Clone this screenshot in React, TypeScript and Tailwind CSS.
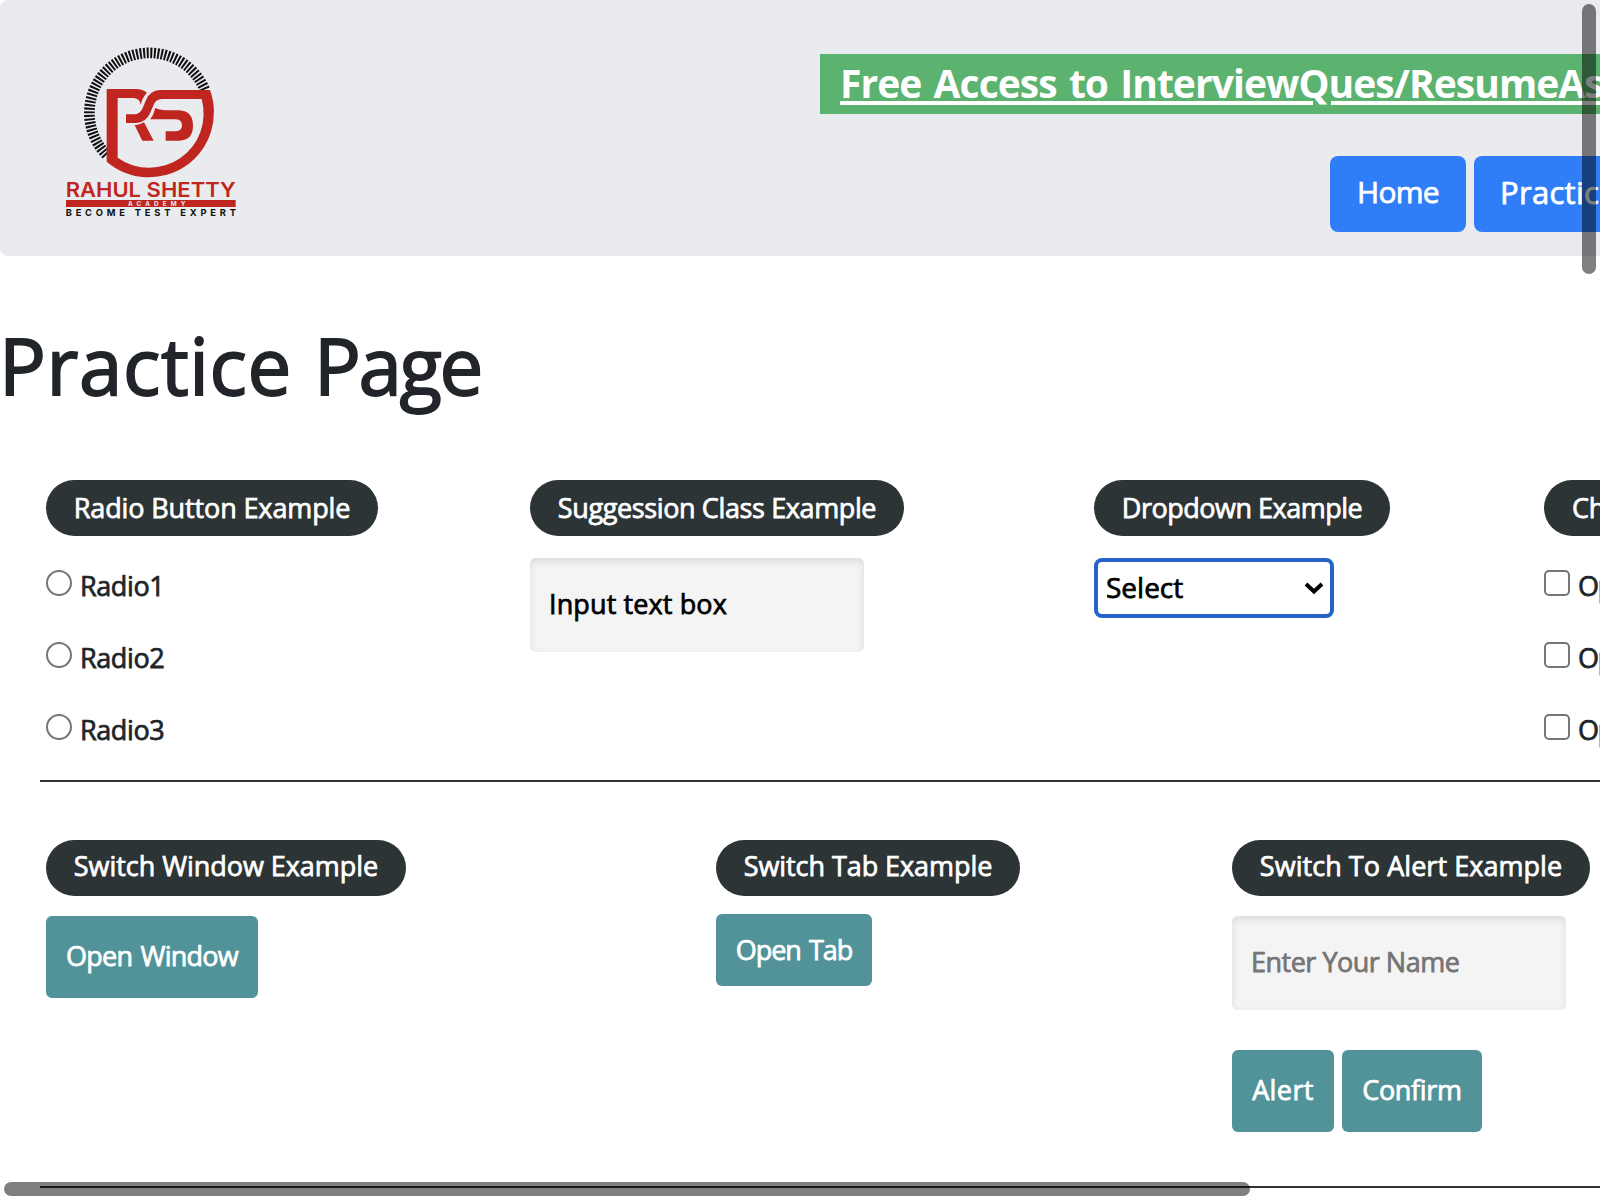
import type { ReactNode } from "react";

function Logo() {
  return (
    <svg viewBox="0 0 600 600" className="h-[200px] w-[200px]" aria-label="Rahul Shetty Academy">
      <path
        d="M169.5 374.5 A180 180 0 1 1 465 181"
        fill="none"
        stroke="#101010"
        strokeWidth="32"
        strokeDasharray="6 4.6"
      />
      <g fill="#bf2620">
        <path d="M170 177H256Q280 178 291 188Q277 202 272 224Q270 206 252 204H203V383A163 163 0 0 0 455 207H335Q318 208 312 222L300 250Q288 278 258 279H228V253H252Q270 252 277 236L288 210Q300 181 330 180H480A195 195 0 0 1 170 395Z" />
        <path d="M315 234Q328 240 345 241H388Q429 244 429 287Q429 330 388 332H347V304H378Q396 303 396 286Q396 269 378 268H300Q312 255 315 234Z" />
        <path d="M254 286Q270 284 282 277L311 332H277Z" />
        <rect x="48" y="510" width="509" height="21" />
        <text x="47" y="502" fontFamily="Inter" fontSize="62" fontWeight="600" textLength="510" lengthAdjust="spacingAndGlyphs">
          RAHUL SHETTY
        </text>
      </g>
      <text x="234" y="527.5" fill="#e9ebef" fontFamily="Inter" fontSize="19" fontWeight="700" textLength="172">
        ACADEMY
      </text>
      <text x="47" y="557.5" fill="#101010" fontFamily="Inter" fontSize="28" fontWeight="700" textLength="511">
        BECOME TEST EXPERT
      </text>
    </svg>
  );
}

function Pill({ className, children }: { className: string; children: ReactNode }) {
  return (
    <div className={`h-14 shrink-0 rounded-full bg-[#2d3436] text-center whitespace-nowrap text-white ${className}`}>
      {children}
    </div>
  );
}

function Button({ className, children }: { className: string; children: ReactNode }) {
  return (
    <button className={`block shrink-0 rounded-md bg-[#529299] text-center whitespace-nowrap text-white ${className}`}>
      {children}
    </button>
  );
}

function Field({ className, children }: { className: string; children: ReactNode }) {
  return (
    <div
      className={`h-[94px] w-[334px] rounded-md bg-[#f4f4f4] pl-[19px] leading-[91px] whitespace-nowrap shadow-[inset_0_3px_7px_#dadada] ${className}`}
    >
      {children}
    </div>
  );
}

function Choice({ round, children }: { round?: boolean; children: ReactNode }) {
  return (
    <label className="flex h-[72px] gap-2">
      <span
        className={`mt-1 h-[26px] w-[26px] shrink-0 border-2 border-[#767676] bg-white ${round ? "rounded-full" : "rounded-[5px]"}`}
      />
      <span className={`leading-[39px] whitespace-nowrap ${round ? "tracking-[-0.4px]" : "tracking-[-1.2px]"}`}>
        {children}
      </span>
    </label>
  );
}

export default function App() {
  return (
    <div className="relative flex h-[1200px] w-[1600px] flex-col overflow-hidden bg-white font-['Open_Sans',sans-serif] text-[27px] text-[#212529] [-webkit-text-stroke:0.75px_currentColor]">
      <header className="flex h-64 shrink-0 justify-between rounded-l-lg bg-[#e9ebef]">
        <div className="pt-[30px] pl-[50px] [-webkit-text-stroke:0px]">
          <Logo />
        </div>
        <div className="w-[780px] shrink-0 overflow-hidden pt-[54px]">
          <a
            href="#"
            className="block h-[60px] bg-[#5cb26f] pl-5 text-[39px] leading-[58px] font-bold tracking-[-0.95px] whitespace-nowrap text-white underline decoration-4 underline-offset-[3px] [-webkit-text-stroke:0px] [word-spacing:3px]"
          >
            Free Access to InterviewQues/ResumeAssistance/Material
          </a>
          <nav className="mt-[42px] flex gap-2 pl-[510px] text-[31px] leading-[72px] text-white">
            <a href="#" className="h-[76px] w-[136px] shrink-0 rounded-lg bg-[#2f7ef8] text-center text-[30px] tracking-[-0.7px]">
              Home
            </a>
            <a href="#" className="h-[76px] w-[160px] shrink-0 rounded-lg bg-[#2f7ef8] pl-[26px] tracking-[0.3px]">
              Practice
            </a>
          </nav>
        </div>
      </header>

      <h1 className="mt-[58px] flex h-[166px] shrink-0 text-[78px] leading-[103px] [-webkit-text-stroke:1.8px_currentColor]">
        <span className="-ml-px w-[315px] tracking-[0.6px]">Practice </span>
        <span className="tracking-[-2.4px]">Page</span>
      </h1>

      <section className="ml-10 flex h-[302px] shrink-0 border-b-2 border-[#2d3436] pl-1.5 leading-[55px]">
        <div className="w-[484px] shrink-0">
          <Pill className="w-[332px] tracking-[-0.12px]">Radio Button Example</Pill>
          <div className="mt-[30px]">
            <Choice round>Radio1</Choice>
            <Choice round>Radio2</Choice>
            <Choice round>Radio3</Choice>
          </div>
        </div>
        <div className="w-[564px] shrink-0">
          <Pill className="w-[374px] tracking-[-0.38px]">Suggession Class Example</Pill>
          <Field className="mt-[22px] tracking-[0.12px] text-black">Input text box</Field>
        </div>
        <div className="w-[450px] shrink-0">
          <Pill className="w-[296px] tracking-[-0.5px]">Dropdown Example</Pill>
          <div className="mt-[22px] flex h-[60px] w-[240px] justify-between rounded-lg border-4 border-[#2464c9] pr-1.5 pl-2 text-[28px] leading-[50px] text-black">
            <span>Select</span>
            <svg viewBox="0 0 20 14" className="mt-[19px] h-[14px] w-5" aria-hidden="true">
              <path d="M2 3l8 7.5L18 3" fill="none" stroke="currentColor" strokeWidth="4" />
            </svg>
          </div>
        </div>
        <div className="w-[320px] shrink-0">
          <Pill className="w-[320px] tracking-[-0.3px]">
            <span className="block pl-7 text-left">Checkbox Example</span>
          </Pill>
          <div className="mt-[30px]">
            <Choice>Option1</Choice>
            <Choice>Option2</Choice>
            <Choice>Option3</Choice>
          </div>
        </div>
      </section>

      <section className="ml-10 flex h-[406px] shrink-0 border-b-2 border-[#2d3436] pt-[58px] pl-1.5 leading-[51px]">
        <div className="w-[670px] shrink-0">
          <Pill className="w-[360px] tracking-[-0.05px]">Switch Window Example</Pill>
          <Button className="mt-5 h-[82px] w-[212px] pb-1 leading-[79px] tracking-[-0.75px] [word-spacing:2px]">Open Window</Button>
        </div>
        <div className="w-[516px] shrink-0">
          <Pill className="w-[304px] tracking-[-0.06px]">Switch Tab Example</Pill>
          <Button className="mt-[18px] h-[72px] w-[156px] pb-0.5 leading-[71px] tracking-[-1px] [word-spacing:2px]">Open Tab</Button>
        </div>
        <div className="w-[358px] shrink-0">
          <Pill className="w-[358px] tracking-[0.05px]">Switch To Alert Example</Pill>
          <Field className="mt-5 tracking-[-0.5px] text-[#757575]">Enter Your Name</Field>
          <div className="mt-10 flex gap-2">
            <Button className="h-[82px] w-[102px] pb-1 leading-[79px] tracking-[0.4px]">Alert</Button>
            <Button className="h-[82px] w-[140px] pb-1 leading-[79px] tracking-[-0.33px]">Confirm</Button>
          </div>
        </div>
      </section>

      <div className="absolute top-1 right-1 h-[270px] w-3.5 rounded-full bg-black/50" />
      <div className="absolute bottom-1 left-1 h-3.5 w-[1246px] rounded-full bg-black/50" />
    </div>
  );
}
